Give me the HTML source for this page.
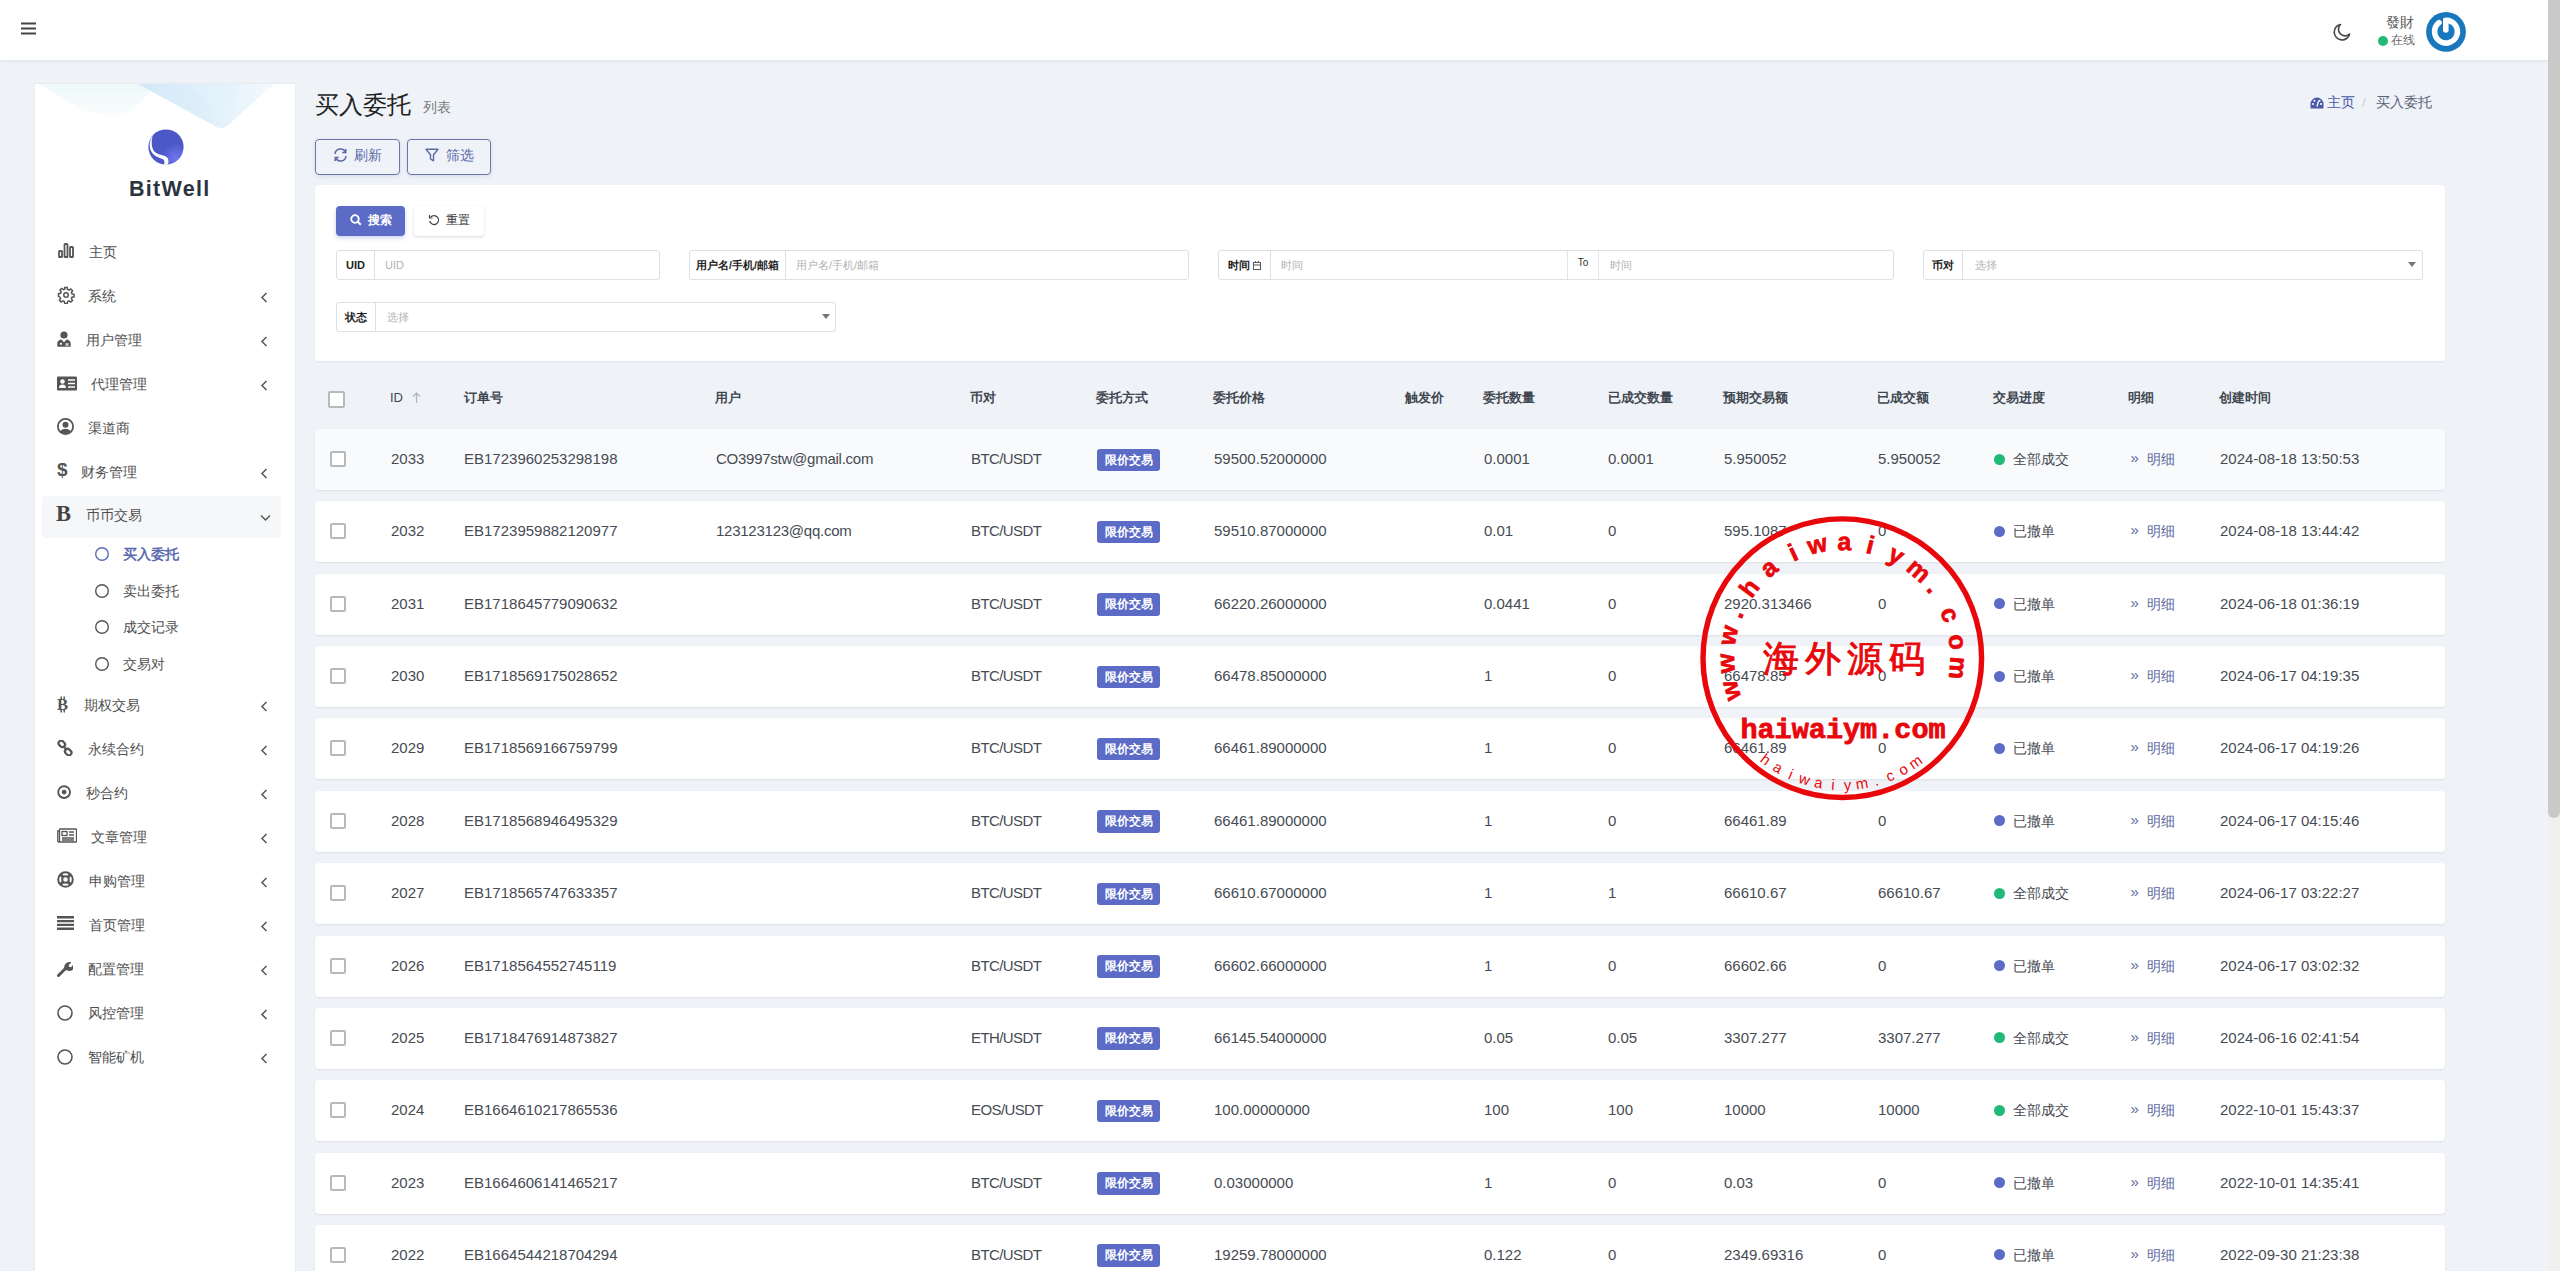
<!DOCTYPE html>
<html><head><meta charset="utf-8">
<style>
*{box-sizing:border-box;margin:0;padding:0}
html,body{width:2560px;height:1271px;overflow:hidden}
body{background:#eff3f8;font-family:"Liberation Sans",sans-serif;color:#414750;position:relative}
.abs{position:absolute}
#hdr{position:absolute;left:0;top:0;width:2548px;height:60px;background:#fff;box-shadow:0 1px 3px rgba(0,0,0,.08)}
#sbar{position:absolute;left:2548px;top:0;width:12px;height:1271px;background:#f1f0f0}
#sthumb{position:absolute;left:2548px;top:0;width:12px;height:818px;background:#c9c9ca;border-radius:0 0 6px 6px}
#side{position:absolute;left:35px;top:84px;width:260px;height:1300px;background:#fff;box-shadow:0 0 2px rgba(0,0,0,.09)}
.mactive{position:absolute;left:42px;width:239px;height:42px;background:#f6f7f9;border-radius:4px}
.micon{position:absolute;line-height:0}
.micon .gly{line-height:18px;color:#555;display:inline-block}
.mtext{position:absolute;font-size:14px;line-height:20px;color:#4f4f4f;white-space:nowrap}
.msub{color:#5b6bb0;font-weight:bold}
.marr{position:absolute;left:260px}
.c{position:absolute;white-space:nowrap;font-size:15px;line-height:60px;top:0;color:#464b53}
.cn{font-size:14px}
.lk{color:#5c6a9e;font-size:14px}
.raq{font-size:15px;top:-1px}
.row{position:absolute;left:315px;width:2130px;height:61px;background:#fff;border-radius:4px;box-shadow:0 1px 2px rgba(0,0,0,.08)}
.row.hov{background:#f9fafc}
.cb{position:absolute;top:22px;width:16px;height:16px;border:2px solid #b6b9be;border-radius:2px;background:#fff}
.badge{position:absolute;top:19.5px;height:22.5px;width:63px;background:#5b6bc6;color:#fff;font-size:12px;font-weight:bold;line-height:22.5px;text-align:center;border-radius:3px}
.dot{position:absolute;top:24.5px;width:11px;height:11px;border-radius:50%}
.dot.g{background:#21b978}.dot.b{background:#5b6bc6}
.th{position:absolute;top:388px;font-size:12.5px;font-weight:bold;line-height:20px;color:#414750;white-space:nowrap}
.ig{position:absolute;height:30px;border:1px solid #dcdfe4;border-radius:3px;background:#fff}
.ig .lb{position:absolute;left:0;top:0;bottom:0;border-right:1px solid #dcdfe4;font-size:11px;font-weight:bold;color:#222;line-height:28px;text-align:center}
.ig .ph{position:absolute;top:0;font-size:11px;line-height:28px;color:#b3b3b3;white-space:nowrap}
.ig .car{position:absolute;top:11px;width:0;height:0;border-left:4.5px solid transparent;border-right:4.5px solid transparent;border-top:5px solid #777}
</style></head><body>
<div id="hdr">
 <svg class="abs" style="left:21px;top:21.5px" width="15" height="13" viewBox="0 0 15 13"><path d="M0.5 1.5h14M0.5 6.5h14M0.5 11.5h14" stroke="#444" stroke-width="2.1" stroke-linecap="round"/></svg>
 <svg class="abs" style="left:2332px;top:23px" width="19" height="19" viewBox="0 0 19 19"><path d="M8.5 1.5A7.8 7.8 0 1 0 17.6 11 6.3 6.3 0 0 1 8.5 1.5z" fill="none" stroke="#444" stroke-width="1.6" stroke-linejoin="round"/></svg>
 <span class="abs" style="left:2386px;top:14px;font-size:13.5px;line-height:18px;color:#555">發財</span>
 <i class="abs" style="left:2378px;top:36px;width:10px;height:10px;border-radius:50%;background:#21b978"></i>
 <span class="abs" style="left:2391px;top:32px;font-size:12px;line-height:17px;color:#666">在线</span>
 <svg class="abs" style="left:2425px;top:11px" width="42" height="42" viewBox="0 0 42 42"><circle cx="21" cy="20.9" r="19.9" fill="#1877bd"/><path d="M21.00 9.20A11.4 11.4 0 1 1 13.98 11.62" fill="none" stroke="#fff" stroke-width="5.6" stroke-linecap="round"/><path d="M18 7.5V19a2.8 2.8 0 0 0 5.6 0V7.5z" fill="#fff"/></svg>
</div>
<div id="sbar"></div><div id="sthumb"></div>

<div id="side">
 <svg class="abs" style="left:0;top:0" width="260" height="60" viewBox="0 0 260 60">
  <defs>
   <linearGradient id="wg" x1="0" y1="0" x2="1" y2="0"><stop offset="0" stop-color="#c2e0f6"/><stop offset=".45" stop-color="#cfe7f8"/><stop offset="1" stop-color="#eef7fd"/></linearGradient>
   <linearGradient id="wc" x1="0" y1="0" x2="0" y2="1"><stop offset="0" stop-color="#e3f4f6"/><stop offset="1" stop-color="#f6fbfb"/></linearGradient>
  </defs>
  <path d="M4 0 L120 0 Q110 18 90 30 Q60 36 30 16 Z" fill="url(#wc)" opacity=".6"/>
  <path d="M103 0 L240 0 L232 6 L192 42 Q185 47 178 41 Z" fill="url(#wg)" opacity=".7"/>
  <path d="M150 0 L205 0 L186 28 Z" fill="#e4f2fb" opacity=".5"/>
 </svg>
 <svg class="abs" style="left:113px;top:45px" width="36" height="36" viewBox="0 0 36 36"><defs><radialGradient id="lg" cx=".78" cy=".82" r=".42"><stop offset="0" stop-color="#7277f2"/><stop offset="1" stop-color="#4b58c6"/></radialGradient></defs><circle cx="18" cy="18" r="17.6" fill="url(#lg)"/><path d="M4.8 6.5C0.8 12 0.6 19.5 4.5 24.2 7.5 28 12 28.6 15 30.2 16.6 31.2 16.9 33.5 16 35.9L19.8 35.5C21.2 32.4 20.6 28.8 17.4 27.2 14 25.6 9.2 25.4 6.3 22.4 3.4 19 3 12.5 4.8 6.5Z" fill="#fff"/></svg>
 <span class="abs" style="left:94px;top:91.5px;font-size:21.5px;font-weight:bold;line-height:26px;color:#2b333e;letter-spacing:1.3px">BitWell</span>
</div>
<div class="micon" style="left:58px;top:243px"><svg width="16" height="15" viewBox="0 0 16 15"><g fill="none" stroke="#555" stroke-width="1.8"><rect x="1" y="8" width="3" height="6" rx=".6"/><rect x="6.5" y="1" width="3" height="13" rx=".6"/><rect x="12" y="4" width="3" height="10" rx=".6"/></g></svg></div><span class="mtext" style="left:88.6px;top:242px">主页</span><div class="micon" style="left:57px;top:286px"><svg width="18" height="18" viewBox="0 0 24 24"><path fill="none" stroke="#555" stroke-width="2" d="M10.3 2h3.4l.5 2.7 1.9.8 2.3-1.6 2.4 2.4-1.6 2.3.8 1.9 2.7.5v3.4l-2.7.5-.8 1.9 1.6 2.3-2.4 2.4-2.3-1.6-1.9.8-.5 2.7h-3.4l-.5-2.7-1.9-.8-2.3 1.6-2.4-2.4 1.6-2.3-.8-1.9L2 13.7v-3.4l2.7-.5.8-1.9-1.6-2.3 2.4-2.4 2.3 1.6 1.9-.8z"/><circle cx="12" cy="12" r="3" fill="none" stroke="#555" stroke-width="2"/></svg></div><span class="mtext" style="left:88px;top:286px">系统</span><svg class="marr" style="top:292px" width="8" height="11" viewBox="0 0 8 11"><path d="M6.5 1L2 5.5 6.5 10" fill="none" stroke="#555" stroke-width="1.5"/></svg><div class="micon" style="left:57px;top:331px"><svg width="14" height="16" viewBox="0 0 14 16"><circle cx="7" cy="4" r="3.6" fill="#555"/><path d="M0.3 15.8v-3.4C0.3 9.9 2.4 8.6 4.4 8.4L7 11.3l2.6-2.9c2 .2 4.1 1.5 4.1 4v3.4z" fill="#555"/><circle cx="4" cy="12.8" r="1.1" fill="#fff"/><path d="M9.2 12v3M10.9 12v3" stroke="#fff" stroke-width="1"/></svg></div><span class="mtext" style="left:85.5px;top:330px">用户管理</span><svg class="marr" style="top:336px" width="8" height="11" viewBox="0 0 8 11"><path d="M6.5 1L2 5.5 6.5 10" fill="none" stroke="#555" stroke-width="1.5"/></svg><div class="micon" style="left:57px;top:375.5px"><svg width="20" height="15" viewBox="0 0 20 15"><rect x="0" y="0.5" width="20" height="14" rx="1.2" fill="#555"/><circle cx="5.5" cy="5.5" r="2.2" fill="#fff"/><path d="M2 12c0-2.5 1.5-3.5 3.5-3.5S9 9.5 9 12z" fill="#fff"/><path d="M11 4h7M11 7.5h7M11 11h7" stroke="#fff" stroke-width="1.3"/></svg></div><span class="mtext" style="left:91px;top:374px">代理管理</span><svg class="marr" style="top:380px" width="8" height="11" viewBox="0 0 8 11"><path d="M6.5 1L2 5.5 6.5 10" fill="none" stroke="#555" stroke-width="1.5"/></svg><div class="micon" style="left:57px;top:418px"><svg width="17" height="17" viewBox="0 0 17 17"><circle cx="8.5" cy="8.5" r="7.6" fill="none" stroke="#555" stroke-width="1.8"/><circle cx="8.5" cy="6.8" r="3" fill="#555"/><path d="M3.2 13.6c1.2-2 3-2.8 5.3-2.8s4.1.8 5.3 2.8c-1.4 1.4-3.2 2.1-5.3 2.1s-3.9-.7-5.3-2.1z" fill="#555"/></svg></div><span class="mtext" style="left:88px;top:418px">渠道商</span><div class="micon" style="left:57px;top:461px"><span class="gly" style="font-size:19px;font-weight:bold">$</span></div><span class="mtext" style="left:81px;top:462px">财务管理</span><svg class="marr" style="top:468px" width="8" height="11" viewBox="0 0 8 11"><path d="M6.5 1L2 5.5 6.5 10" fill="none" stroke="#555" stroke-width="1.5"/></svg><div class="mactive" style="top:496px"></div><div class="micon" style="left:56px;top:504.5px"><span class="gly" style="font-family:'Liberation Serif',serif;font-size:22.5px;font-weight:bold;color:#444">B</span></div><span class="mtext" style="left:85.6px;top:505px">币币交易</span><svg class="marr" style="top:513.5px;left:260px" width="11" height="8" viewBox="0 0 11 8"><path d="M1 1.5l4.5 4.5 4.5-4.5" fill="none" stroke="#555" stroke-width="1.5"/></svg><div class="micon" style="left:57px;top:695.5px"><svg width="13" height="17" viewBox="0 0 13 17"><path d="M4.2 0.5v2.5M7.2 0.5v2.5M4.2 14v2.5M7.2 14v2.5" stroke="#555" stroke-width="1.5"/><text x="0" y="14.3" font-family="Liberation Serif" font-weight="bold" font-size="16.5" fill="#555">B</text></svg></div><span class="mtext" style="left:83.6px;top:695px">期权交易</span><svg class="marr" style="top:701px" width="8" height="11" viewBox="0 0 8 11"><path d="M6.5 1L2 5.5 6.5 10" fill="none" stroke="#555" stroke-width="1.5"/></svg><div class="micon" style="left:57px;top:740px"><svg width="16" height="16" viewBox="0 0 16 16"><g fill="none" stroke="#555" stroke-width="2.2"><rect x="1.3" y="1.3" width="7" height="5.2" rx="2.6" transform="rotate(45 4.8 3.9)"/><rect x="7.7" y="9.5" width="7" height="5.2" rx="2.6" transform="rotate(45 11.2 12.1)"/><path d="M6 6l4 4"/></g></svg></div><span class="mtext" style="left:87.6px;top:739px">永续合约</span><svg class="marr" style="top:745px" width="8" height="11" viewBox="0 0 8 11"><path d="M6.5 1L2 5.5 6.5 10" fill="none" stroke="#555" stroke-width="1.5"/></svg><div class="micon" style="left:57px;top:784.5px"><svg width="15" height="15" viewBox="0 0 15 15"><circle cx="7.1" cy="7.1" r="5.9" fill="none" stroke="#555" stroke-width="1.9"/><circle cx="7.1" cy="7.1" r="2.4" fill="#555"/></svg></div><span class="mtext" style="left:85.6px;top:783px">秒合约</span><svg class="marr" style="top:789px" width="8" height="11" viewBox="0 0 8 11"><path d="M6.5 1L2 5.5 6.5 10" fill="none" stroke="#555" stroke-width="1.5"/></svg><div class="micon" style="left:57px;top:827.5px"><svg width="20" height="15" viewBox="0 0 20 15"><g fill="none" stroke="#555" stroke-width="1.3"><rect x="2.5" y="1" width="17" height="13" rx=".8"/><path d="M2.5 3H.8v10.2c0 .5.4.8.8.8h1"/><rect x="5" y="3.5" width="5" height="4"/><path d="M12 4h5M12 7h5M5 10h12M5 12h12"/></g></svg></div><span class="mtext" style="left:90.7px;top:826.5px">文章管理</span><svg class="marr" style="top:832.5px" width="8" height="11" viewBox="0 0 8 11"><path d="M6.5 1L2 5.5 6.5 10" fill="none" stroke="#555" stroke-width="1.5"/></svg><div class="micon" style="left:57px;top:871px"><svg width="17" height="17" viewBox="0 0 17 17"><circle cx="8.5" cy="8.5" r="7.3" fill="none" stroke="#555" stroke-width="2"/><circle cx="8.5" cy="8.5" r="3.3" fill="none" stroke="#555" stroke-width="2"/><path d="M3.5 3.5l2.6 2.6M13.5 3.5l-2.6 2.6M3.5 13.5l2.6-2.6M13.5 13.5l-2.6-2.6" stroke="#555" stroke-width="3"/></svg></div><span class="mtext" style="left:89.4px;top:871px">申购管理</span><svg class="marr" style="top:877px" width="8" height="11" viewBox="0 0 8 11"><path d="M6.5 1L2 5.5 6.5 10" fill="none" stroke="#555" stroke-width="1.5"/></svg><div class="micon" style="left:57px;top:916px"><svg width="17" height="14" viewBox="0 0 17 14"><path d="M0 1.2h17M0 5.1h17M0 8.9h17M0 12.8h17" stroke="#555" stroke-width="2.4"/></svg></div><span class="mtext" style="left:88.7px;top:915px">首页管理</span><svg class="marr" style="top:921px" width="8" height="11" viewBox="0 0 8 11"><path d="M6.5 1L2 5.5 6.5 10" fill="none" stroke="#555" stroke-width="1.5"/></svg><div class="micon" style="left:57px;top:960.5px"><svg width="16" height="16" viewBox="0 0 16 16"><path d="M1.5 14.5l7-7" stroke="#555" stroke-width="3" stroke-linecap="round"/><path d="M9.2 2.2c1.5-1.3 3.6-1.5 5.1-.7l-2.6 2.4.4 1.9 1.9.4 2.4-2.6c.8 1.5.6 3.6-.7 5.1-1.5 1.5-3.7 1.7-5.3.9L7.6 8.4c-.8-1.6-.5-4.6 1.6-6.2z" fill="#555"/></svg></div><span class="mtext" style="left:87.7px;top:959px">配置管理</span><svg class="marr" style="top:965px" width="8" height="11" viewBox="0 0 8 11"><path d="M6.5 1L2 5.5 6.5 10" fill="none" stroke="#555" stroke-width="1.5"/></svg><div class="micon" style="left:57px;top:1004.5px"><svg width="16" height="16" viewBox="0 0 16 16"><circle cx="8" cy="8" r="7" fill="none" stroke="#555" stroke-width="1.6"/></svg></div><span class="mtext" style="left:88px;top:1003px">风控管理</span><svg class="marr" style="top:1009px" width="8" height="11" viewBox="0 0 8 11"><path d="M6.5 1L2 5.5 6.5 10" fill="none" stroke="#555" stroke-width="1.5"/></svg><div class="micon" style="left:57px;top:1048.5px"><svg width="16" height="16" viewBox="0 0 16 16"><circle cx="8" cy="8" r="7" fill="none" stroke="#555" stroke-width="1.6"/></svg></div><span class="mtext" style="left:88px;top:1047px">智能矿机</span><svg class="marr" style="top:1053px" width="8" height="11" viewBox="0 0 8 11"><path d="M6.5 1L2 5.5 6.5 10" fill="none" stroke="#555" stroke-width="1.5"/></svg><svg class="micon" style="left:94px;top:546px" width="16" height="16" viewBox="0 0 16 16"><circle cx="8" cy="8" r="6.3" fill="none" stroke="#5b6bb0" stroke-width="1.4"/></svg><span class="mtext msub" style="left:123px;top:544px">买入委托</span><svg class="micon" style="left:94px;top:583px" width="16" height="16" viewBox="0 0 16 16"><circle cx="8" cy="8" r="6.3" fill="none" stroke="#555" stroke-width="1.4"/></svg><span class="mtext" style="left:123px;top:581px">卖出委托</span><svg class="micon" style="left:94px;top:619px" width="16" height="16" viewBox="0 0 16 16"><circle cx="8" cy="8" r="6.3" fill="none" stroke="#555" stroke-width="1.4"/></svg><span class="mtext" style="left:123px;top:617px">成交记录</span><svg class="micon" style="left:94px;top:656px" width="16" height="16" viewBox="0 0 16 16"><circle cx="8" cy="8" r="6.3" fill="none" stroke="#555" stroke-width="1.4"/></svg><span class="mtext" style="left:123px;top:654px">交易对</span>

<span class="abs" style="left:315px;top:91px;font-size:24px;line-height:28px;color:#222">买入委托</span>
<span class="abs" style="left:423px;top:98px;font-size:14px;line-height:18px;color:#777">列表</span>

<svg class="abs" style="left:2310px;top:97px" width="14" height="12" viewBox="0 0 14 12"><path d="M7 .5A6.5 6.5 0 0 0 .5 7v4.5h13V7A6.5 6.5 0 0 0 7 .5z" fill="#4a5aa8"/><circle cx="3" cy="7" r="1" fill="#fff"/><circle cx="4.5" cy="3.7" r="1" fill="#fff"/><circle cx="9.5" cy="3.7" r="1" fill="#fff"/><circle cx="11" cy="7" r="1" fill="#fff"/><path d="M7 9.5l1.5-5.5" stroke="#fff" stroke-width="1.3"/></svg>
<span class="abs" style="left:2327px;top:94px;font-size:13.5px;line-height:18px;color:#4a5aa8">主页</span>
<span class="abs" style="left:2362px;top:94px;font-size:13px;line-height:18px;color:#ccc">/</span>
<span class="abs" style="left:2376px;top:94px;font-size:13.5px;line-height:18px;color:#5a6177">买入委托</span>

<div class="abs" style="left:315px;top:139px;width:85px;height:36px;border:1.5px solid #6b76a6;border-radius:4px;box-shadow:0 1px 4px rgba(88,108,177,.2)"></div>
<svg class="abs" style="left:333px;top:148px" width="15" height="14" viewBox="0 0 15 14"><path d="M2 6A5.5 5.5 0 0 1 12.3 3.8M13 8A5.5 5.5 0 0 1 2.7 10.2" fill="none" stroke="#5c68a8" stroke-width="1.5"/><path d="M12.8 1v3.6H9.2M2.2 13V9.4h3.6" fill="none" stroke="#5c68a8" stroke-width="1.5"/></svg>
<span class="abs" style="left:354px;top:145px;font-size:14px;line-height:20px;color:#5c68a8">刷新</span>
<div class="abs" style="left:407px;top:139px;width:84px;height:36px;border:1.5px solid #6b76a6;border-radius:4px;box-shadow:0 1px 4px rgba(88,108,177,.2)"></div>
<svg class="abs" style="left:425px;top:148px" width="14" height="14" viewBox="0 0 14 14"><path d="M1 1.2h12L8.5 6.8V12.8L5.5 11V6.8z" fill="none" stroke="#5c68a8" stroke-width="1.4" stroke-linejoin="round"/></svg>
<span class="abs" style="left:446px;top:145px;font-size:14px;line-height:20px;color:#5c68a8">筛选</span>

<div class="abs" style="left:315px;top:185px;width:2130px;height:176px;background:#fff;border-radius:4px;box-shadow:0 1px 2px rgba(0,0,0,.06)"></div>
<div class="abs" style="left:336px;top:206px;width:69px;height:30px;background:#5b6bc6;border-radius:4px;box-shadow:0 2px 4px rgba(91,107,198,.3)"></div>
<svg class="abs" style="left:350px;top:214px" width="12" height="12" viewBox="0 0 12 12"><circle cx="5" cy="5" r="3.8" fill="none" stroke="#fff" stroke-width="1.8"/><path d="M7.8 7.8l3 3" stroke="#fff" stroke-width="2"/></svg>
<span class="abs" style="left:368px;top:211px;font-size:12px;font-weight:bold;line-height:18px;color:#fff">搜索</span>
<div class="abs" style="left:414px;top:206px;width:70px;height:30px;background:#fff;border-radius:3px;box-shadow:0 1px 3px rgba(0,0,0,.16)"></div>
<svg class="abs" style="left:428px;top:214px" width="12" height="12" viewBox="0 0 12 12"><path d="M2.6 3.2A4.5 4.5 0 1 1 1.7 7" fill="none" stroke="#444" stroke-width="1.2"/><path d="M1.5 1v3h3" fill="none" stroke="#444" stroke-width="1.2"/></svg>
<span class="abs" style="left:446px;top:211px;font-size:12px;line-height:18px;color:#333">重置</span>

<div class="ig" style="left:336px;top:250px;width:324px"><span class="lb" style="width:38px">UID</span><span class="ph" style="left:48px">UID</span></div>
<div class="ig" style="left:689px;top:250px;width:500px"><span class="lb" style="width:96px;font-size:10.5px">用户名/手机/邮箱</span><span class="ph" style="left:106px">用户名/手机/邮箱</span></div>
<div class="ig" style="left:1218px;top:250px;width:676px"><span class="lb" style="width:52px">时间 <svg width="8" height="9" viewBox="0 0 8 9" style="vertical-align:-1px"><rect x=".5" y="1.5" width="7" height="7" fill="none" stroke="#555"/><path d="M.5 4h7M2.5 0v2M5.5 0v2" stroke="#555"/></svg></span><span class="ph" style="left:62px">时间</span>
 <span class="abs" style="left:348px;top:0;width:32px;height:28px;border-left:1px solid #e3e5e9;border-right:1px solid #e3e5e9;font-size:10px;line-height:24px;text-align:center;color:#333">To</span><span class="ph" style="left:391px">时间</span></div>
<div class="ig" style="left:1923px;top:250px;width:500px"><span class="lb" style="width:39px">币对</span><span class="ph" style="left:51px">选择</span><i class="car" style="left:484px"></i></div>
<div class="ig" style="left:336px;top:302px;width:500px"><span class="lb" style="width:39px">状态</span><span class="ph" style="left:50px">选择</span><i class="car" style="left:485px"></i></div>

<i class="cb abs" style="left:328px;top:391px;width:17px;height:17px"></i>
<span class="th" style="left:390px;font-weight:normal;font-size:13px">ID</span>
<svg class="abs" style="left:412px;top:392px" width="9" height="11" viewBox="0 0 9 11"><path d="M4.5 1v10M1 4.5L4.5 1 8 4.5" fill="none" stroke="#a9b4b8" stroke-width="1.2"/></svg>
<span class="th" style="left:464px">订单号</span>
<span class="th" style="left:715px">用户</span>
<span class="th" style="left:970px">币对</span>
<span class="th" style="left:1096px">委托方式</span>
<span class="th" style="left:1213px">委托价格</span>
<span class="th" style="left:1405px">触发价</span>
<span class="th" style="left:1483px">委托数量</span>
<span class="th" style="left:1608px">已成交数量</span>
<span class="th" style="left:1723px">预期交易额</span>
<span class="th" style="left:1877px">已成交额</span>
<span class="th" style="left:1993px">交易进度</span>
<span class="th" style="left:2128px">明细</span>
<span class="th" style="left:2219px">创建时间</span>

<div class="row hov" style="top:429.00px"><i class="cb" style="left:14.5px"></i><span class="c" style="left:76px">2033</span><span class="c" style="left:149px">EB1723960253298198</span><span class="c" style="left:401px;letter-spacing:-0.25px">CO3997stw@gmail.com</span><span class="c" style="left:656px;letter-spacing:-0.6px">BTC/USDT</span><span class="badge" style="left:782px">限价交易</span><span class="c" style="left:899px">59500.52000000</span><span class="c" style="left:1169px">0.0001</span><span class="c" style="left:1293px">0.0001</span><span class="c" style="left:1409px">5.950052</span><span class="c" style="left:1563px">5.950052</span><i class="dot g" style="left:1679px"></i><span class="c cn" style="left:1698px">全部成交</span><span class="c lk raq" style="left:1815.5px">»</span><span class="c lk" style="left:1831.5px">明细</span><span class="c" style="left:1905px">2024-08-18 13:50:53</span></div>
<div class="row" style="top:501.36px"><i class="cb" style="left:14.5px"></i><span class="c" style="left:76px">2032</span><span class="c" style="left:149px">EB1723959882120977</span><span class="c" style="left:401px;letter-spacing:-0.25px">123123123@qq.com</span><span class="c" style="left:656px;letter-spacing:-0.6px">BTC/USDT</span><span class="badge" style="left:782px">限价交易</span><span class="c" style="left:899px">59510.87000000</span><span class="c" style="left:1169px">0.01</span><span class="c" style="left:1293px">0</span><span class="c" style="left:1409px">595.1087</span><span class="c" style="left:1563px">0</span><i class="dot b" style="left:1679px"></i><span class="c cn" style="left:1698px">已撤单</span><span class="c lk raq" style="left:1815.5px">»</span><span class="c lk" style="left:1831.5px">明细</span><span class="c" style="left:1905px">2024-08-18 13:44:42</span></div>
<div class="row" style="top:573.72px"><i class="cb" style="left:14.5px"></i><span class="c" style="left:76px">2031</span><span class="c" style="left:149px">EB1718645779090632</span><span class="c" style="left:656px;letter-spacing:-0.6px">BTC/USDT</span><span class="badge" style="left:782px">限价交易</span><span class="c" style="left:899px">66220.26000000</span><span class="c" style="left:1169px">0.0441</span><span class="c" style="left:1293px">0</span><span class="c" style="left:1409px">2920.313466</span><span class="c" style="left:1563px">0</span><i class="dot b" style="left:1679px"></i><span class="c cn" style="left:1698px">已撤单</span><span class="c lk raq" style="left:1815.5px">»</span><span class="c lk" style="left:1831.5px">明细</span><span class="c" style="left:1905px">2024-06-18 01:36:19</span></div>
<div class="row" style="top:646.08px"><i class="cb" style="left:14.5px"></i><span class="c" style="left:76px">2030</span><span class="c" style="left:149px">EB1718569175028652</span><span class="c" style="left:656px;letter-spacing:-0.6px">BTC/USDT</span><span class="badge" style="left:782px">限价交易</span><span class="c" style="left:899px">66478.85000000</span><span class="c" style="left:1169px">1</span><span class="c" style="left:1293px">0</span><span class="c" style="left:1409px">66478.85</span><span class="c" style="left:1563px">0</span><i class="dot b" style="left:1679px"></i><span class="c cn" style="left:1698px">已撤单</span><span class="c lk raq" style="left:1815.5px">»</span><span class="c lk" style="left:1831.5px">明细</span><span class="c" style="left:1905px">2024-06-17 04:19:35</span></div>
<div class="row" style="top:718.44px"><i class="cb" style="left:14.5px"></i><span class="c" style="left:76px">2029</span><span class="c" style="left:149px">EB1718569166759799</span><span class="c" style="left:656px;letter-spacing:-0.6px">BTC/USDT</span><span class="badge" style="left:782px">限价交易</span><span class="c" style="left:899px">66461.89000000</span><span class="c" style="left:1169px">1</span><span class="c" style="left:1293px">0</span><span class="c" style="left:1409px">66461.89</span><span class="c" style="left:1563px">0</span><i class="dot b" style="left:1679px"></i><span class="c cn" style="left:1698px">已撤单</span><span class="c lk raq" style="left:1815.5px">»</span><span class="c lk" style="left:1831.5px">明细</span><span class="c" style="left:1905px">2024-06-17 04:19:26</span></div>
<div class="row" style="top:790.80px"><i class="cb" style="left:14.5px"></i><span class="c" style="left:76px">2028</span><span class="c" style="left:149px">EB1718568946495329</span><span class="c" style="left:656px;letter-spacing:-0.6px">BTC/USDT</span><span class="badge" style="left:782px">限价交易</span><span class="c" style="left:899px">66461.89000000</span><span class="c" style="left:1169px">1</span><span class="c" style="left:1293px">0</span><span class="c" style="left:1409px">66461.89</span><span class="c" style="left:1563px">0</span><i class="dot b" style="left:1679px"></i><span class="c cn" style="left:1698px">已撤单</span><span class="c lk raq" style="left:1815.5px">»</span><span class="c lk" style="left:1831.5px">明细</span><span class="c" style="left:1905px">2024-06-17 04:15:46</span></div>
<div class="row" style="top:863.16px"><i class="cb" style="left:14.5px"></i><span class="c" style="left:76px">2027</span><span class="c" style="left:149px">EB1718565747633357</span><span class="c" style="left:656px;letter-spacing:-0.6px">BTC/USDT</span><span class="badge" style="left:782px">限价交易</span><span class="c" style="left:899px">66610.67000000</span><span class="c" style="left:1169px">1</span><span class="c" style="left:1293px">1</span><span class="c" style="left:1409px">66610.67</span><span class="c" style="left:1563px">66610.67</span><i class="dot g" style="left:1679px"></i><span class="c cn" style="left:1698px">全部成交</span><span class="c lk raq" style="left:1815.5px">»</span><span class="c lk" style="left:1831.5px">明细</span><span class="c" style="left:1905px">2024-06-17 03:22:27</span></div>
<div class="row" style="top:935.52px"><i class="cb" style="left:14.5px"></i><span class="c" style="left:76px">2026</span><span class="c" style="left:149px">EB1718564552745119</span><span class="c" style="left:656px;letter-spacing:-0.6px">BTC/USDT</span><span class="badge" style="left:782px">限价交易</span><span class="c" style="left:899px">66602.66000000</span><span class="c" style="left:1169px">1</span><span class="c" style="left:1293px">0</span><span class="c" style="left:1409px">66602.66</span><span class="c" style="left:1563px">0</span><i class="dot b" style="left:1679px"></i><span class="c cn" style="left:1698px">已撤单</span><span class="c lk raq" style="left:1815.5px">»</span><span class="c lk" style="left:1831.5px">明细</span><span class="c" style="left:1905px">2024-06-17 03:02:32</span></div>
<div class="row" style="top:1007.88px"><i class="cb" style="left:14.5px"></i><span class="c" style="left:76px">2025</span><span class="c" style="left:149px">EB1718476914873827</span><span class="c" style="left:656px;letter-spacing:-0.6px">ETH/USDT</span><span class="badge" style="left:782px">限价交易</span><span class="c" style="left:899px">66145.54000000</span><span class="c" style="left:1169px">0.05</span><span class="c" style="left:1293px">0.05</span><span class="c" style="left:1409px">3307.277</span><span class="c" style="left:1563px">3307.277</span><i class="dot g" style="left:1679px"></i><span class="c cn" style="left:1698px">全部成交</span><span class="c lk raq" style="left:1815.5px">»</span><span class="c lk" style="left:1831.5px">明细</span><span class="c" style="left:1905px">2024-06-16 02:41:54</span></div>
<div class="row" style="top:1080.24px"><i class="cb" style="left:14.5px"></i><span class="c" style="left:76px">2024</span><span class="c" style="left:149px">EB1664610217865536</span><span class="c" style="left:656px;letter-spacing:-0.6px">EOS/USDT</span><span class="badge" style="left:782px">限价交易</span><span class="c" style="left:899px">100.00000000</span><span class="c" style="left:1169px">100</span><span class="c" style="left:1293px">100</span><span class="c" style="left:1409px">10000</span><span class="c" style="left:1563px">10000</span><i class="dot g" style="left:1679px"></i><span class="c cn" style="left:1698px">全部成交</span><span class="c lk raq" style="left:1815.5px">»</span><span class="c lk" style="left:1831.5px">明细</span><span class="c" style="left:1905px">2022-10-01 15:43:37</span></div>
<div class="row" style="top:1152.60px"><i class="cb" style="left:14.5px"></i><span class="c" style="left:76px">2023</span><span class="c" style="left:149px">EB1664606141465217</span><span class="c" style="left:656px;letter-spacing:-0.6px">BTC/USDT</span><span class="badge" style="left:782px">限价交易</span><span class="c" style="left:899px">0.03000000</span><span class="c" style="left:1169px">1</span><span class="c" style="left:1293px">0</span><span class="c" style="left:1409px">0.03</span><span class="c" style="left:1563px">0</span><i class="dot b" style="left:1679px"></i><span class="c cn" style="left:1698px">已撤单</span><span class="c lk raq" style="left:1815.5px">»</span><span class="c lk" style="left:1831.5px">明细</span><span class="c" style="left:1905px">2022-10-01 14:35:41</span></div>
<div class="row" style="top:1224.96px"><i class="cb" style="left:14.5px"></i><span class="c" style="left:76px">2022</span><span class="c" style="left:149px">EB1664544218704294</span><span class="c" style="left:656px;letter-spacing:-0.6px">BTC/USDT</span><span class="badge" style="left:782px">限价交易</span><span class="c" style="left:899px">19259.78000000</span><span class="c" style="left:1169px">0.122</span><span class="c" style="left:1293px">0</span><span class="c" style="left:1409px">2349.69316</span><span class="c" style="left:1563px">0</span><i class="dot b" style="left:1679px"></i><span class="c cn" style="left:1698px">已撤单</span><span class="c lk raq" style="left:1815.5px">»</span><span class="c lk" style="left:1831.5px">明细</span><span class="c" style="left:1905px">2022-09-30 21:23:38</span></div>


<svg class="abs" style="left:1692px;top:508px" width="300" height="300" viewBox="0 0 300 300"><g fill="#e8070b"><circle cx="150.3" cy="150.2" r="139.3" fill="none" stroke="#e8070b" stroke-width="5.4"/><text x="0" y="0" transform="translate(46.64 180.51) rotate(253.70)" text-anchor="middle" font-family="Liberation Sans" font-weight="bold" font-size="25" stroke="#e8070b" stroke-width=".7">w</text><text x="0" y="0" transform="translate(42.41 155.10) rotate(267.40)" text-anchor="middle" font-family="Liberation Sans" font-weight="bold" font-size="25" stroke="#e8070b" stroke-width=".7">w</text><text x="0" y="0" transform="translate(44.39 129.04) rotate(281.30)" text-anchor="middle" font-family="Liberation Sans" font-weight="bold" font-size="25" stroke="#e8070b" stroke-width=".7">w</text><text x="0" y="0" transform="translate(50.67 108.52) rotate(292.70)" text-anchor="middle" font-family="Liberation Sans" font-weight="bold" font-size="25" stroke="#e8070b" stroke-width=".7">.</text><text x="0" y="0" transform="translate(64.05 85.20) rotate(307.00)" text-anchor="middle" font-family="Liberation Sans" font-weight="bold" font-size="25" stroke="#e8070b" stroke-width=".7">h</text><text x="0" y="0" transform="translate(82.19 66.39) rotate(320.90)" text-anchor="middle" font-family="Liberation Sans" font-weight="bold" font-size="25" stroke="#e8070b" stroke-width=".7">a</text><text x="0" y="0" transform="translate(104.66 52.32) rotate(335.00)" text-anchor="middle" font-family="Liberation Sans" font-weight="bold" font-size="25" stroke="#e8070b" stroke-width=".7">i</text><text x="0" y="0" transform="translate(127.11 44.72) rotate(347.60)" text-anchor="middle" font-family="Liberation Sans" font-weight="bold" font-size="25" stroke="#e8070b" stroke-width=".7">w</text><text x="0" y="0" transform="translate(152.18 42.22) rotate(361.00)" text-anchor="middle" font-family="Liberation Sans" font-weight="bold" font-size="25" stroke="#e8070b" stroke-width=".7">a</text><text x="0" y="0" transform="translate(176.43 45.41) rotate(374.00)" text-anchor="middle" font-family="Liberation Sans" font-weight="bold" font-size="25" stroke="#e8070b" stroke-width=".7">i</text><text x="0" y="0" transform="translate(200.50 54.58) rotate(387.70)" text-anchor="middle" font-family="Liberation Sans" font-weight="bold" font-size="25" stroke="#e8070b" stroke-width=".7">y</text><text x="0" y="0" transform="translate(221.44 68.94) rotate(401.20)" text-anchor="middle" font-family="Liberation Sans" font-weight="bold" font-size="25" stroke="#e8070b" stroke-width=".7">m</text><text x="0" y="0" transform="translate(235.87 84.30) rotate(412.40)" text-anchor="middle" font-family="Liberation Sans" font-weight="bold" font-size="25" stroke="#e8070b" stroke-width=".7">.</text><text x="0" y="0" transform="translate(250.44 109.74) rotate(428.00)" text-anchor="middle" font-family="Liberation Sans" font-weight="bold" font-size="25" stroke="#e8070b" stroke-width=".7">c</text><text x="0" y="0" transform="translate(257.22 134.98) rotate(441.90)" text-anchor="middle" font-family="Liberation Sans" font-weight="bold" font-size="25" stroke="#e8070b" stroke-width=".7">o</text><text x="0" y="0" transform="translate(257.92 159.24) rotate(454.80)" text-anchor="middle" font-family="Liberation Sans" font-weight="bold" font-size="25" stroke="#e8070b" stroke-width=".7">m</text><text x="0" y="0" transform="translate(70.68 255.48) rotate(37.10)" text-anchor="middle" font-family="Liberation Sans" font-size="15">h</text><text x="0" y="0" transform="translate(83.25 263.90) rotate(30.53)" text-anchor="middle" font-family="Liberation Sans" font-size="15">a</text><text x="0" y="0" transform="translate(96.71 270.83) rotate(23.95)" text-anchor="middle" font-family="Liberation Sans" font-size="15">i</text><text x="0" y="0" transform="translate(110.87 276.17) rotate(17.38)" text-anchor="middle" font-family="Liberation Sans" font-size="15">w</text><text x="0" y="0" transform="translate(125.55 279.86) rotate(10.81)" text-anchor="middle" font-family="Liberation Sans" font-size="15">a</text><text x="0" y="0" transform="translate(140.55 281.84) rotate(4.24)" text-anchor="middle" font-family="Liberation Sans" font-size="15">i</text><text x="0" y="0" transform="translate(155.68 282.09) rotate(-2.34)" text-anchor="middle" font-family="Liberation Sans" font-size="15">y</text><text x="0" y="0" transform="translate(170.74 280.61) rotate(-8.91)" text-anchor="middle" font-family="Liberation Sans" font-size="15">m</text><text x="0" y="0" transform="translate(185.54 277.41) rotate(-15.48)" text-anchor="middle" font-family="Liberation Sans" font-size="15">.</text><text x="0" y="0" transform="translate(199.86 272.54) rotate(-22.05)" text-anchor="middle" font-family="Liberation Sans" font-size="15">c</text><text x="0" y="0" transform="translate(213.54 266.06) rotate(-28.63)" text-anchor="middle" font-family="Liberation Sans" font-size="15">o</text><text x="0" y="0" transform="translate(226.39 258.06) rotate(-35.20)" text-anchor="middle" font-family="Liberation Sans" font-size="15">m</text><text x="154.5" y="163" text-anchor="middle" font-family="Liberation Serif" font-size="36" letter-spacing="6" stroke="#e8070b" stroke-width=".9">海外源码</text><text x="151" y="230" text-anchor="middle" font-family="Liberation Mono" font-weight="bold" font-size="28.5" stroke="#e8070b" stroke-width=".8">haiwaiym.com</text></g></svg>
</body></html>
